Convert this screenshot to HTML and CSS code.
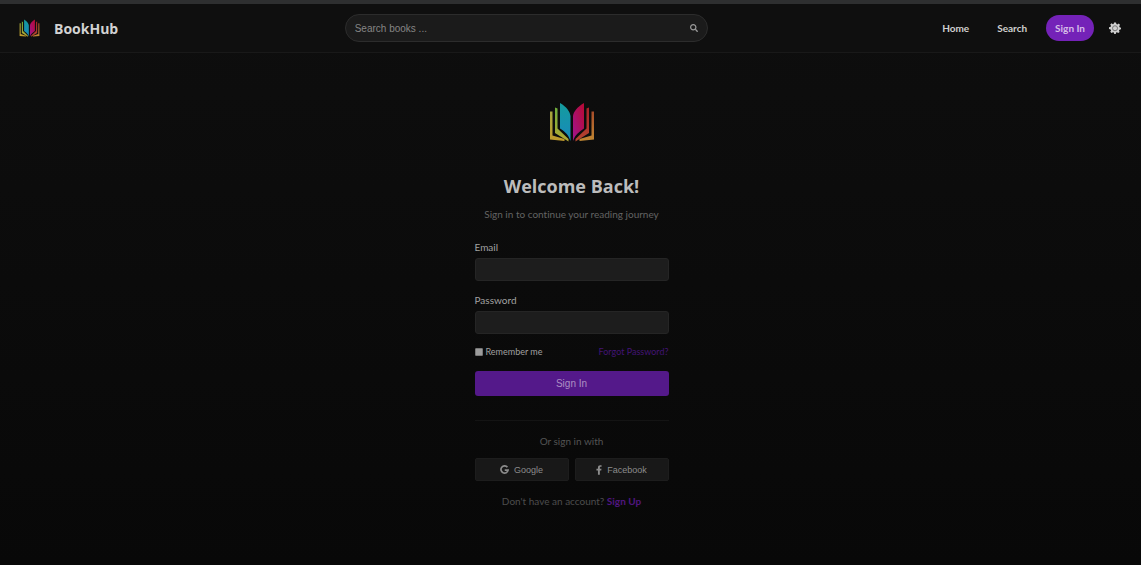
FILE: index.html
```html
<!DOCTYPE html>
<html lang="en">
<head>
<meta charset="utf-8">
<meta name="viewport" content="width=device-width, initial-scale=1">
<title>BookHub - Sign In</title>
<link rel="stylesheet" href="styles.css">
</head>
<body>
<svg class="defs" aria-hidden="true">
  <defs>
    <linearGradient id="outer-left" x1="0" y1="0" x2="0" y2="1"><stop offset="0" stop-color="#a5a63c"/><stop offset="1" stop-color="#c09a2c"/></linearGradient>
    <linearGradient id="inner-left" x1="0" y1="0" x2="0" y2="1"><stop offset="0" stop-color="#6fae3c"/><stop offset="1" stop-color="#b3a934"/></linearGradient>
    <linearGradient id="page-left" x1="0" y1="0" x2="0" y2="1"><stop offset="0" stop-color="#149c9d"/><stop offset="1" stop-color="#1889bd"/></linearGradient>
    <linearGradient id="page-right" x1="1" y1="0" x2="0" y2="1"><stop offset="0" stop-color="#b80a32"/><stop offset="1" stop-color="#a01490"/></linearGradient>
    <linearGradient id="inner-right" x1="0" y1="0" x2="0" y2="1"><stop offset="0" stop-color="#a82429"/><stop offset="1" stop-color="#b5442f"/></linearGradient>
    <linearGradient id="outer-right" x1="0" y1="0" x2="0" y2="1"><stop offset="0" stop-color="#a84c29"/><stop offset="1" stop-color="#c08732"/></linearGradient>
    <symbol id="book" viewBox="0 0 46 40">
      <path fill="url(#outer-left)" d="M1 9.500h2.500v24l12 3.500v2L1 37.500z"/>
      <path fill="url(#inner-left)" d="M6 5.500l2.500 1v20l11 10.500v2.500L6 31z"/>
      <path fill="url(#page-left)" d="M11 1c7 4 10 9 10.500 13v25c-2-6-5-9-10.500-12.500z"/>
      <path fill="url(#page-right)" d="M35 1c-7 4-10.500 9-11 13v25c2-6 6-9 11-12.500z"/>
      <path fill="url(#inner-right)" d="M40 5.500l-2.500 1v20l-11 10.500v2.500L40 31z"/>
      <path fill="url(#outer-right)" d="M45 9.500h-2.500v24L30.500 37v2L45 37.500z"/>
    </symbol>
  </defs>
</svg>

<header class="header">
  <a class="brand" href="#">
    <svg class="brand-logo" aria-hidden="true"><use href="#book"/></svg>
    <span>BookHub</span>
  </a>
  <form class="search" role="search">
    <input class="search-input" type="search" placeholder="Search books ..." aria-label="Search books">
    <button class="search-button" type="button" aria-label="Search">
      <svg viewBox="0 0 512 512" aria-hidden="true"><path d="M505 442.700 405.300 343c-4.500-4.500-10.600-7-17-7H372c27.600-35.300 44-79.700 44-128C416 93.100 322.900 0 208 0S0 93.100 0 208s93.100 208 208 208c48.300 0 92.700-16.400 128-44v16.300c0 6.400 2.500 12.500 7 17l99.700 99.700c9.400 9.400 24.600 9.400 33.900 0l28.300-28.300c9.400-9.400 9.400-24.600.1-34zM208 336c-70.700 0-128-57.200-128-128 0-70.700 57.200-128 128-128 70.700 0 128 57.200 128 128 0 70.700-57.200 128-128 128z"/></svg>
    </button>
  </form>
  <nav class="nav">
    <a class="nav-link" href="#">Home</a>
    <a class="nav-link" href="#">Search</a>
    <a class="nav-cta" href="#">Sign In</a>
    <button class="settings" type="button" aria-label="Settings">
      <svg viewBox="0 0 24 24" aria-hidden="true">
        <path d="M10 1h4l.8 3.200 1.800.8L19.500 3.200l2.500 2.500-1.500 3 .6 1.700L24 11.500v3l-3.200.8-.8 1.700 1.200 3-2.700 2-2.700-1.500-1.500.7L13.500 24h-3l-.8-3-1.700-.7L5 22l-2.500-2.500L4.200 17l-.9-1.900L0 14v-3.500l3.300-.8.8-1.700L2.500 5 5 2.700 7.700 4.500l1.600-.6z"/>
        <circle class="gear-ring" cx="12" cy="12.500" r="5"/>
      </svg>
    </button>
  </nav>
</header>

<main class="main">
  <section class="card">
    <svg class="card-logo" aria-hidden="true"><use href="#book"/></svg>
    <h1 class="title">Welcome Back!</h1>
    <p class="subtitle">Sign in to continue your reading journey</p>
    <form class="form">
      <label class="label" for="email">Email</label>
      <input class="field" id="email" type="email">
      <label class="label" for="password">Password</label>
      <input class="field" id="password" type="password">
      <div class="options">
        <label class="remember" for="remember"><input class="checkbox" id="remember" type="checkbox">Remember me</label>
        <a class="forgot" href="#">Forgot Password?</a>
      </div>
      <button class="submit" type="button">Sign In</button>
    </form>
    <div class="social">
      <p class="social-text">Or sign in with</p>
      <div class="social-buttons">
        <button class="social-button" type="button">
          <svg class="google" viewBox="0 0 20 20" aria-hidden="true"><path d="M16.500 5A8 8 0 1 0 18 11.500h-7.500" fill="none" stroke="currentColor" stroke-width="3.800"/></svg>
          Google
        </button>
        <button class="social-button" type="button">
          <svg class="facebook" viewBox="0 0 320 512" aria-hidden="true"><path d="M279.100 288l14.200-92.700h-88.900v-60.100c0-25.400 12.400-50.100 52.200-50.100H297V6.300S260.400 0 225.400 0c-73.200 0-121.100 44.400-121.100 124.700v70.600H22.900V288h81.400v224h100.200V288z"/></svg>
          Facebook
        </button>
      </div>
    </div>
    <p class="signup">Don't have an account? <a class="signup-link" href="#">Sign Up</a></p>
  </section>
</main>
</body>
</html>
```

FILE: styles.css
```css
* { box-sizing: border-box; }

body {
  margin: 0;
  min-height: 100vh;
  color: #b4b4b4;
  background: linear-gradient(#0e0e0e, #080808);
  border-top: 4px solid #2e2f30;
  font-family: Lato, "Open Sans", sans-serif;
  font-size: 10px;
  font-variant-ligatures: none;
}

a { color: inherit; text-decoration: none; }
button, input { font-family: "Liberation Sans", Arial, sans-serif; }
button { padding: 0; border: 0; cursor: pointer; }
svg { display: block; fill: currentColor; }

.defs { position: absolute; width: 0; height: 0; }

.header {
  display: flex;
  align-items: center;
  justify-content: space-between;
  height: 49px;
  padding: 0 19px;
  background: #0f0f0f;
  border-bottom: 1px solid #191919;
}

.brand {
  display: flex;
  align-items: center;
  gap: 14px;
  color: #d2d2d2;
  font-family: "Open Sans", sans-serif;
  font-size: 14px;
  font-weight: 700;
}

.brand-logo { width: 21px; height: 18px; }

.search {
  display: flex;
  align-items: center;
  width: 363px;
  height: 28px;
  margin-right: 8px;
  padding: 0 9px;
  background: #1b1b1b;
  border: 1px solid #2c2c2c;
  border-radius: 14px;
}

.search-input {
  flex: 1;
  min-width: 0;
  padding: 0;
  color: #b4b4b4;
  background: none;
  border: 0;
  outline: 0;
  font-size: 10px;
}

.search-input::placeholder { color: #858585; opacity: 1; }
.search-button { color: #999; background: none; }
.search-button svg { width: 8px; height: 8px; }

.nav {
  display: flex;
  align-items: center;
  color: #d0d0d0;
  font-weight: 700;
  line-height: 14px;
}

.nav-link { margin-right: 28px; }
.nav-link + .nav-cta { margin-left: -9px; }

.nav-cta {
  padding: 6px 9px;
  color: #d6bce8;
  background: #7422b8;
  border-radius: 13px;
}

.settings {
  margin: 0 1px 0 15px;
  color: #d0d0d0;
  background: none;
}

.settings svg { width: 12px; height: 12px; }
.gear-ring { fill: none; stroke: #777; stroke-width: 2; }

.main { display: flex; justify-content: center; padding: 49px 15px 49px 17px; }

.card { width: 194px; text-align: center; }
.card-logo { width: 46px; height: 40px; margin: 0 auto; }
.title {
  margin: 30px -20px 0;
  color: #bcbcbc;
  font-family: "Open Sans", sans-serif;
  font-size: 18px;
  line-height: 28px;
}
.subtitle { margin: 6px -20px 18px; color: #636363; line-height: 16px; }

.form { text-align: left; }
.label { display: block; margin-bottom: 4px; color: #a2a2a2; line-height: 14px; }

.field {
  display: block;
  width: 100%;
  height: 23px;
  margin-bottom: 12px;
  padding: 0 8px;
  color: #b4b4b4;
  background: #1d1d1d;
  border: 1px solid #252525;
  border-radius: 3px;
}

.options {
  display: flex;
  align-items: center;
  justify-content: space-between;
  margin-bottom: 13px;
  color: #a0a0a0;
  font-size: 9px;
  line-height: 12px;
}

.remember { display: flex; align-items: center; gap: 3px; }

.checkbox {
  appearance: none;
  width: 8px;
  height: 8px;
  margin: 0;
  background: #9c9c9c;
  border: 1px solid #777;
  border-radius: 1px;
}

.checkbox:checked { background: #54198c; }
.forgot { color: #431475; }

.submit {
  width: 100%;
  height: 25px;
  color: #ad8fc4;
  background: #54198a;
  border-radius: 3px;
  font-size: 10px;
}

.social { margin-top: 24px; padding-top: 12px; border-top: 1px solid #141414; }
.social-text { margin: 0 0 9px; color: #545454; line-height: 16px; }
.social-buttons { display: grid; grid-template-columns: 1fr 1fr; gap: 6px; }

.social-button {
  display: flex;
  align-items: center;
  justify-content: center;
  gap: 5px;
  height: 23px;
  color: #8c8c8c;
  background: #181818;
  border: 1px solid #1d1d1d;
  border-radius: 2px;
  font-size: 9px;
}

.google { width: 9px; height: 9px; }
.facebook { width: 6px; height: 10px; }

.signup { margin: 12px 0 0; color: #4d4d4d; line-height: 16px; white-space: nowrap; }
.signup-link { color: #501680; font-weight: 700; }
```
